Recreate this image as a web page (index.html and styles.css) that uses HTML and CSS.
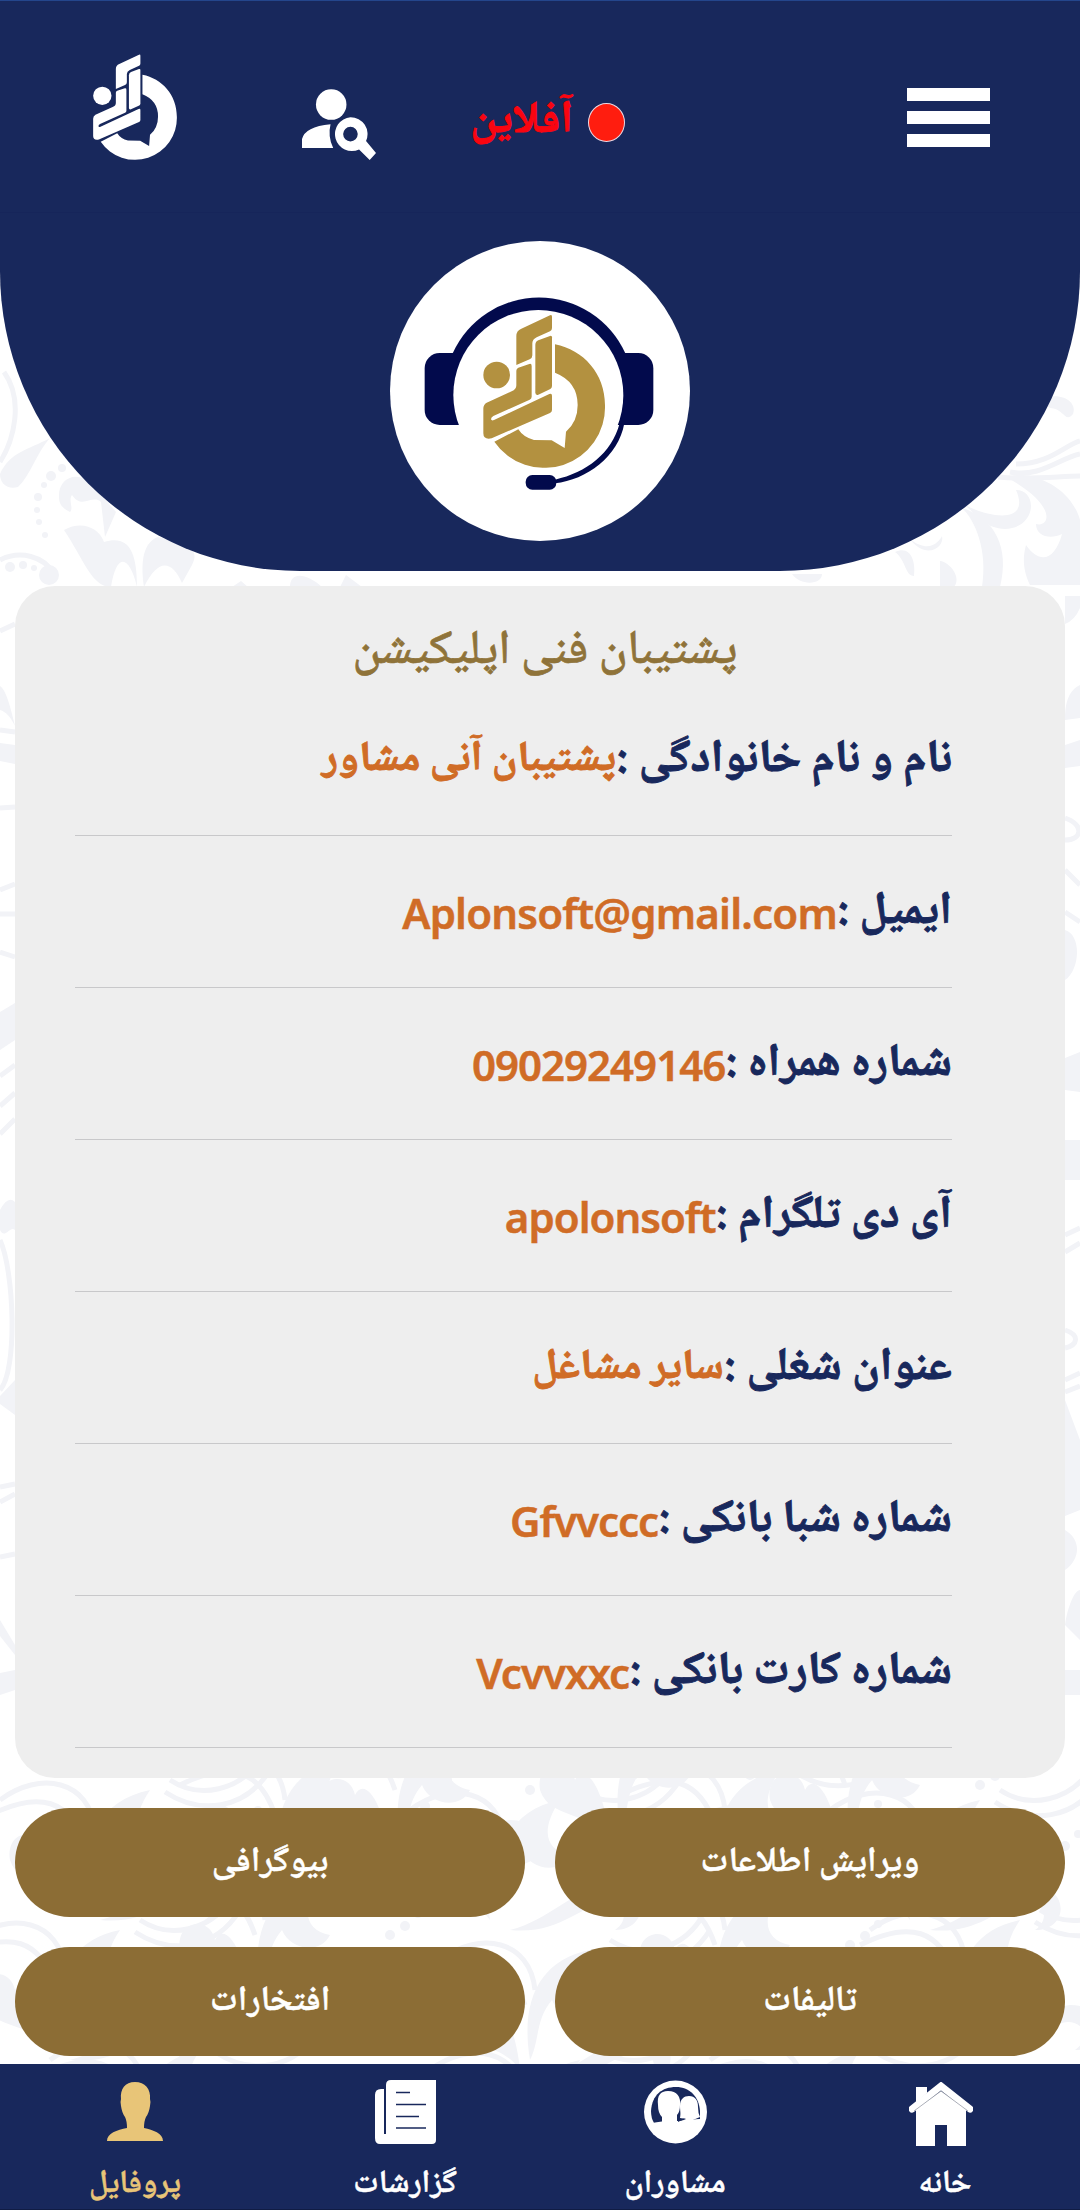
FILE: index.html
```html
<!DOCTYPE html>
<html lang="fa" dir="rtl">
<head>
<meta charset="utf-8">
<title>پروفایل</title>
<link rel="stylesheet" href="styles.css">
</head>
<body>
<svg class="defs" width="0" height="0" aria-hidden="true">
  <symbol id="logo" viewBox="305 250 375 463">
    <circle cx="350" cy="435" r="40"/>
    <path d="M409 405V318Q409 302 424 296L510 256Q516 253 516 260V294Q516 301 510 304L470 322Q457 328 457 340V376Q457 385 449 388Z"/>
    <path d="M466 487V345Q466 335 475 331L510 318Q516 316 516 322V468Q516 474 511 477L475 494Q466 497 466 487Z"/>
    <path d="M409 422Q409 416 415 413L448 402Q455 400 455 408V500Q455 506 449 509L340 558Q333 562 333 568Q335 573 342 570L508 492Q516 489 516 497V540Q516 546 510 549L335 625Q310 630 310 610V535Q310 524 320 518L395 484Q409 478 409 466Z"/>
    <path d="M525 343C610 360 675 430 675 526A182 182 0 0 1 343 635L415 598Q430 622 462 630L515 631L554 654L558 605Q593 575 593 525Q593 455 525 428Z"/>
  </symbol>
</svg>

<svg class="pattern" width="1080" height="2210" viewBox="0 0 1080 2210" aria-hidden="true">
  <defs>
    <g id="sprig">
      <path d="M0 130C-10 70 10 30 60 20C40 50 45 70 70 75C60 95 30 90 22 70C5 90 10 110 0 130Z"/>
      <path d="M10 150C50 140 70 110 110 105C150 105 150 150 115 150C130 140 125 122 108 122C80 125 60 155 10 150Z"/>
      <path d="M-10 140C-30 110 -70 120 -80 90C-85 60 -50 55 -45 80C-35 60 -15 90 -10 140Z"/>
      <path class="line" d="M-90 30C-50 0 0 10 5 60M-100 45C-50 20 -20 30 -5 75M80 10C110 30 150 20 170 -10M75 22C110 45 155 40 180 0"/>
      <circle cx="130" cy="75" r="5"/><circle cx="145" cy="66" r="5"/><circle cx="158" cy="54" r="4"/><circle cx="168" cy="40" r="4"/>
    </g>
  </defs>
  <path class="line" d="M4 372C24 400 14 440 0 462"/>
  <path d="M0 474C10 452 28 450 50 438C36 454 30 476 18 487C8 490 0 484 0 474Z"/>
  <circle cx="62" cy="468" r="4"/><circle cx="51" cy="476" r="5"/><circle cx="44" cy="485" r="3"/><circle cx="38" cy="497" r="4"/><circle cx="37" cy="510" r="3"/><circle cx="39" cy="522" r="3"/><circle cx="45" cy="535" r="3"/>
  <path d="M59 497C58 480 74 470 90 482L116 512L105 537L101 502C92 494 82 510 72 495C68 500 74 508 70 512C62 508 59 504 59 497Z"/>
  <path d="M64 530C82 520 99 528 104 542C128 535 137 550 137 587C130 557 117 550 111 587C92 587 84 560 64 530Z"/>
  <path d="M144 587C140 560 144 542 158 537C190 545 200 550 192 565L182 583C172 560 158 558 144 587Z"/>
  <path class="line" d="M0 560C20 550 44 556 54 574"/>
  <circle cx="10" cy="567" r="5"/><circle cx="23" cy="565" r="4"/><circle cx="34" cy="568" r="3"/><circle cx="49" cy="575" r="10"/>
  <path d="M232 587L241 581L248 587ZM290 587C290 570 308 574 322 587ZM340 587L346 575L362 587Z"/>
  <path d="M1040 400C1060 390 1078 402 1073 414C1065 424 1064 408 1050 408Z"/>
  <path class="line" d="M1016 464C1050 464 1065 445 1080 441M1010 472C1040 478 1060 458 1080 454M998 477C1030 480 1060 476 1080 476"/>
  <path d="M1006 477C1050 470 1075 500 1080 520V585H1030C1020 565 1025 550 1026 545C1040 565 1055 560 1062 534C1050 540 1036 536 1036 524C1050 528 1058 505 1006 477Z"/>
  <path d="M1016 490C1038 490 1037 528 1005 529C985 528 976 515 965 505C995 520 1030 522 1016 490Z"/>
  <path d="M962 508C995 518 1010 548 1000 587H982C988 550 975 520 962 508ZM940 561C950 562 962 578 954 587H940ZM895 552C910 545 916 560 914 576C905 576 906 560 895 552ZM910 539C930 555 940 540 942 536C945 548 925 560 910 539ZM792 574H822C822 585 800 586 792 574Z"/>
  <g id="edge">
    <path d="M0 686C6 690 10 705 15 726C10 716 6 712 0 710ZM0 743L15 745V764L0 761ZM0 1012L15 1003V1040L0 1050Z"/>
    <path class="line" d="M0 631L15 624M0 730L15 732M0 808L15 807M0 890L15 884M0 914L15 914M0 952L15 957M0 1076L15 1065M0 1106L15 1093M0 1134L15 1119"/>
    <path d="M0 1210Q8 1195 15 1202V1230C10 1225 5 1240 0 1230Z"/>
    <path class="line" d="M0 1240C14 1270 18 1370 0 1390"/>
    <path d="M0 1396L15 1380V1415L0 1404Z"/>
    <path class="line" d="M0 1487L15 1484M0 1502L15 1494M0 1557L15 1554"/>
    <path d="M0 1620L15 1645V1655L0 1636ZM0 1673L15 1670V1690L0 1695Z"/>
  </g>
  <path d="M1065 596H1080V608Q1075 620 1065 624ZM1065 720C1065 700 1070 690 1080 685V718ZM1065 745L1080 740V766L1065 768ZM1065 930C1082 935 1080 970 1065 980ZM1065 1058L1080 1052V1092L1065 1090ZM1065 1140H1080V1180H1065ZM1065 1400L1080 1440V1510L1065 1516ZM1065 1530C1082 1540 1080 1560 1065 1570ZM1065 1625C1068 1605 1075 1590 1080 1590V1640ZM1065 1670H1080V1695H1065Z"/>
  <path class="line" d="M1065 818C1085 825 1082 840 1065 840M1065 870L1080 885M1065 912L1080 922M1065 1235L1080 1228M1065 1252L1080 1243M1065 1330C1080 1335 1078 1345 1065 1348M1065 1380L1080 1373M1065 1392L1080 1386"/>
  <use href="#sprig" x="90" y="1770"/><use href="#sprig" x="280" y="1740"/>
  <use href="#sprig" x="500" y="1780"/><use href="#sprig" x="720" y="1750"/>
  <use href="#sprig" x="920" y="1780"/><use href="#sprig" x="60" y="1910"/>
  <use href="#sprig" x="260" y="1860"/><use href="#sprig" x="530" y="1930"/>
  <use href="#sprig" x="720" y="1870"/><use href="#sprig" x="960" y="1900"/>
  <use href="#sprig" x="400" y="1715"/><use href="#sprig" x="620" y="1700"/><use href="#sprig" x="850" y="1710"/>
  <use href="#sprig" x="140" y="2030"/><use href="#sprig" x="520" y="2040"/><use href="#sprig" x="800" y="2030"/>
</svg>

<header class="topbar">
  <svg class="menu" viewBox="0 0 83 59"><path d="M0 0H83V13H0ZM0 23H83V36H0ZM0 46H83V59H0Z"/></svg>
  <div class="status"><span class="dot"></span><span class="status-text">آفلاین</span></div>
  <svg class="find" viewBox="723 177 223 214">
    <circle cx="811" cy="224" r="46"/>
    <path d="M723 355V328Q732 290 809 283Q800 320 817 355Z"/>
    <path fill-rule="evenodd" d="M869 262A51 51 0 0 1 916 334L946 370L927 391L895 359A51 51 0 1 1 869 262ZM869 291A22 22 0 1 0 869 335A22 22 0 1 0 869 291Z"/>
  </svg>
  <svg class="brand"><use href="#logo"/></svg>
</header>

<section class="hero">
  <svg class="avatar" viewBox="30 33 900 900">
    <circle class="white" cx="480" cy="483" r="450"/>
    <g class="headset">
      <path d="M218 370A284 284 0 0 1 736 370V400H218Z"/>
      <rect x="134" y="369" width="150" height="216" rx="45"/>
      <rect x="670" y="369" width="150" height="216" rx="45"/>
    </g>
    <circle class="white" cx="475" cy="495" r="255"/>
    <rect class="white" x="238" y="540" width="470" height="60"/>
    <path class="headset" d="M719 580H733C715 680 620 750 525 760V749C620 728 695 670 719 580Z"/>
    <rect class="headset" x="437" y="735" width="92" height="44" rx="20"/>
    <use class="gold" href="#logo" x="305" y="250" width="375" height="463"/>
  </svg>
</section>

<main>
  <section class="card">
    <h1>پشتیبان فنی اپلیکیشن</h1>
    <dl>
      <div class="row"><dt>نام و نام خانوادگی :</dt><dd>پشتیبان آنی مشاور</dd></div>
      <div class="row"><dt>ایمیل :</dt><dd class="latin email">Aplonsoft@gmail.com</dd></div>
      <div class="row"><dt>شماره همراه :</dt><dd class="latin">09029249146</dd></div>
      <div class="row"><dt>آی دی تلگرام :</dt><dd class="latin">apolonsoft</dd></div>
      <div class="row"><dt>عنوان شغلی :</dt><dd>سایر مشاغل</dd></div>
      <div class="row"><dt>شماره شبا بانکی :</dt><dd class="latin">Gfvvccc</dd></div>
      <div class="row"><dt>شماره کارت بانکی :</dt><dd class="latin">Vcvvxxc</dd></div>
    </dl>
  </section>
  <div class="actions">
    <button>ویرایش اطلاعات</button>
    <button>بیوگرافی</button>
    <button>تالیفات</button>
    <button>افتخارات</button>
  </div>
</main>

<nav class="tabs">
  <a class="tab"><svg class="home" viewBox="0 0 64 64">
    <path d="M7 32V5H18V11L7 21Z"/>
    <path d="M3 27L32 4L61 27" class="roof"/>
    <path d="M7 27L32 9L57 27V64H38V43H26V64H7Z"/>
    <path class="seam" d="M5 29L32 9L59 29"/>
  </svg><span>خانه</span></a>
  <a class="tab"><svg viewBox="0 0 64 64">
    <circle cx="32.500" cy="32" r="31.500"/>
    <path class="cut" d="M11 43Q8 38 8 31C9 15 19 7 33 7C47 7 56 17 57 31L57 39L35 42Z"/>
    <path d="M25 11C34 11 38 17 37 25Q37 32 34 35L34 46H19V37Q15 33 15 25C14 16 17 11 25 11Z"/>
    <path d="M37 38C38 33 37 31 37 26C37 19 41 16 46 16C52 16 55 20 55 27Q55 33 57 37L50 40L56 42V48H34V43L43 39Z"/>
    <path d="M9 43L22 41H35L58 39L52 54H14Z"/>
    <path class="cut" d="M35 40L43 38L35 42Z"/>
  </svg><span>مشاوران</span></a>
  <a class="tab"><svg viewBox="0 0 64 64">
    <path d="M13 5Q13 0 18 0H63V60Q63 64 59 64H7Q2 64 2 58V15Q2 9 8 9H11V54H13Z"/>
    <path class="rule" d="M23 12.500H37M23 24.500H53M23 36.500H46M23 48H53"/>
  </svg><span>گزارشات</span></a>
  <a class="tab active"><svg viewBox="0 0 64 64">
    <path d="M32 2C42 2 48 9 47 19Q48 22 47 26Q46 33 43 37Q41 41 41 48C50 50 60 53 60 61H4C4 53 14 50 24 48Q24 41 22 37Q19 33 18 26Q17 22 18 19C17 9 22 2 32 2Z"/>
  </svg><span>پروفایل</span></a>
</nav>
</body>
</html>
```
FILE: styles.css
```css
* { box-sizing: border-box; }
body {
  margin: 0;
  height: 2210px;
  display: flex;
  flex-direction: column;
  background: #fff;
  font-family: "Noto Naskh Arabic", "Noto Sans", sans-serif;
  overflow: hidden;
}
.defs { display: none; }
.pattern { position: absolute; top: 0; left: 0; z-index: -1; fill: #f2f3f7; }
.pattern .line { fill: none; stroke: #f2f3f7; stroke-width: 5; }

.topbar {
  height: 213px;
  flex: none;
  display: flex;
  direction: ltr;
  flex-direction: row-reverse;
  align-items: flex-start;
  background: #18285c;
  border-top: 1px solid #24468c;
  border-bottom: 1px solid #16255a;
}
.topbar svg { fill: #fff; flex: none; }
.menu { width: 83px; height: 59px; margin: 87px 90px 0 282px; }
.status { display: flex; direction: rtl; width: 154px; gap: 15px; margin-top: 81px; }
.dot { width: 37px; height: 39px; margin-top: 21px; border: 1px solid #e9d9e4; border-radius: 50%; background: #ff1d0f; flex: none; }
.status-text { margin-top: 11px; color: #f90510; font-size: 45px; font-weight: 700; line-height: 60px; white-space: nowrap; -webkit-text-stroke: .9px; }
.find { width: 74px; height: 71px; margin: 88px 95px 0 0; }
.brand { width: 86px; height: 107px; margin: 52px 124px 0 0; }

.hero {
  height: 358px;
  flex: none;
  display: flex;
  justify-content: center;
  padding-top: 28px;
  background: #18285c;
  border-radius: 0 0 300px 300px;
}
.avatar { width: 300px; height: 300px; }
.white { fill: #fff; }
.headset { fill: #020a4c; }
.gold { fill: #b39140; }

main { padding: 15px 15px 0; flex: none; }
.card { height: 1192px; padding: 0 113px 0 60px; border-radius: 40px; background: #eee; }
h1 {
  margin: 0 -63px 0 0;
  height: 98px;
  padding: 37px 0 0 0;
  text-align: center;
  color: #8f7339;
  font-size: 48px;
  font-weight: 500;
  line-height: 60px;
  -webkit-text-stroke: .7px;
}
dl { margin: 0; }
.row {
  height: 152px;
  display: flex;
  align-items: center;
  padding-top: 2px;
  border-bottom: 1px solid #c8c8ca;
  color: #18285c;
  font-size: 45.8px;
  font-weight: 700;
  line-height: 60px;
  white-space: nowrap;
  -webkit-text-stroke: .9px;
}
dd { margin: 0; color: #d06c26; font-size: 42.2px; }
.latin { direction: ltr; font-family: "Noto Sans", sans-serif; font-size: 42px; font-weight: 600; letter-spacing: -1px; -webkit-text-stroke: .5px; }
.email { letter-spacing: -.8px; }

.actions { display: grid; grid-template-columns: 1fr 1fr; gap: 30px; padding-top: 30px; }
button { height: 109px; padding: 2px 0 0; border: 0; border-radius: 55px; background: #8c6d35; color: #fff; font-family: inherit; font-size: 35px; font-weight: 600; -webkit-text-stroke: .5px; }

.tabs { height: 146px; margin-top: auto; flex: none; display: grid; grid-template-columns: repeat(4, 1fr); background: #18285c; border-bottom: 1px solid #101c44; }
.tab { display: flex; flex-direction: column; align-items: center; padding-top: 16px; color: #fff; font-size: 32px; font-weight: 600; line-height: 50px; -webkit-text-stroke: .5px; }
.tab svg { width: 64px; height: 64px; fill: currentColor; }
.tab .home { margin: 2px 8px -2px 0; }
.tab span { margin-top: 16px; }
.active { color: #e8c578; }
.roof { fill: none; stroke: #fff; stroke-width: 7; stroke-linecap: round; }
.seam { fill: none; stroke: #8b8f9c; stroke-width: .7; }
.rule { stroke: #18285c; stroke-width: 1.6; }
.cut { fill: #18285c; }
```
